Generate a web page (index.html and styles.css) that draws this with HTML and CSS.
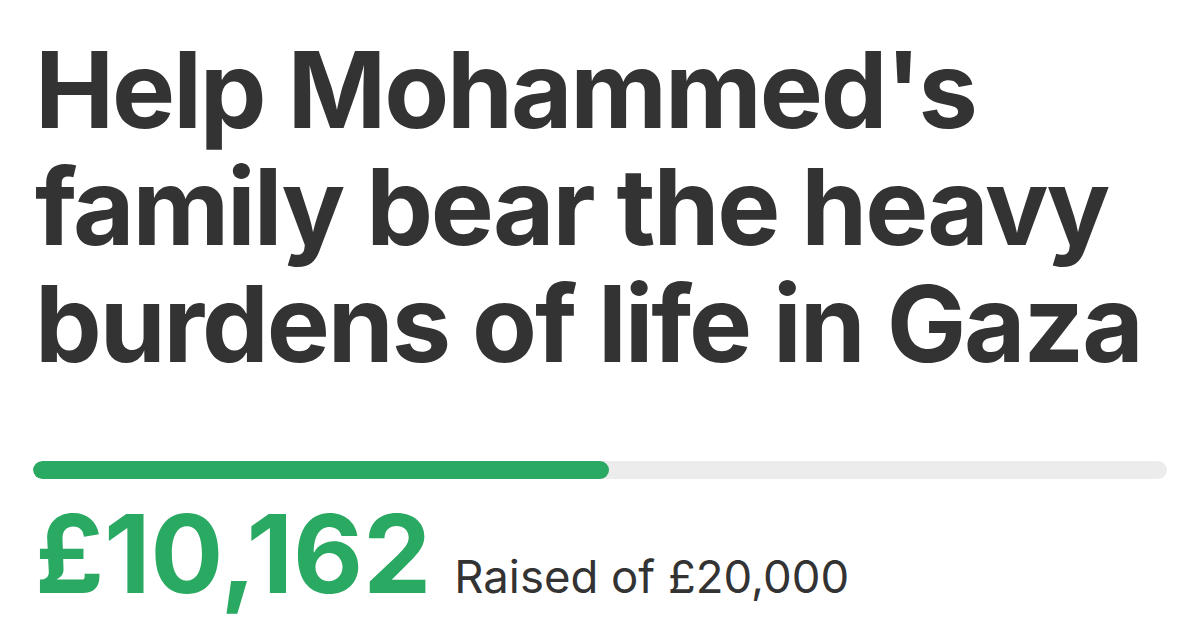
FILE: index.html
```html
<!DOCTYPE html>
<html lang="en">
<head>
<meta charset="utf-8">
<link rel="stylesheet" href="styles.css">
</head>
<body>
<main class="card">
  <h1 class="title">Help Mohammed's family bear the heavy burdens of life in Gaza</h1>
  <div class="progress"><div class="progress-fill" style="width: 50.81%"></div></div>
  <div class="stats">
    <span class="raised">£10,162</span>
    <span class="goal">Raised of £20,000</span>
  </div>
</main>
</body>
</html>
```
FILE: styles.css
```css
html, body {
  margin: 0;
  padding: 0;
  background: #ffffff;
}
body {
  font-family: Inter, "Noto Sans", sans-serif;
  color: #333333;
  width: 1200px;
  height: 625px;
  overflow: hidden;
}
.card {
  padding: 31px 33px 0 33px;
}
.title {
  margin: 0;
  font-size: 106px;
  font-weight: 700;
  line-height: 117px;
  letter-spacing: -2.1px;
  color: #333333;
  padding-left: 2px;
}
.progress {
  margin-top: 79px;
  height: 18px;
  border-radius: 9px;
  background: #ececec;
  overflow: hidden;
}
.progress-fill {
  height: 100%;
  background: #2aa962;
  border-radius: 9px;
}
.stats {
  display: flex;
  align-items: baseline;
  gap: 23px;
  padding-left: 2px;
  margin-top: 21px;
  line-height: 1;
}
.raised {
  font-size: 108px;
  font-weight: 700;
  color: #2aa962;
  letter-spacing: 0;
}
.goal {
  font-size: 45.5px;
  font-weight: 400;
  color: #333333;
}
```
